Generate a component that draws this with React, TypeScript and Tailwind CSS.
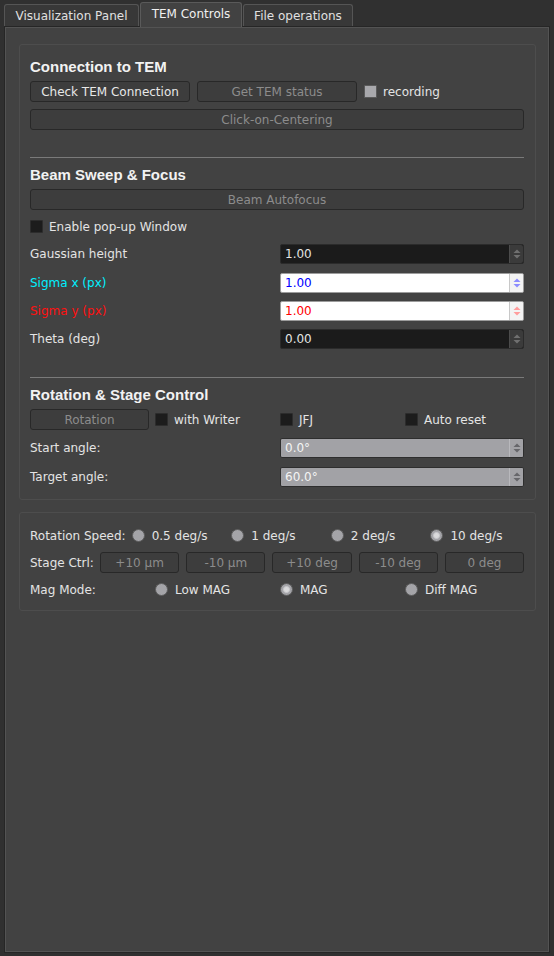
import type { ReactNode } from "react";

const FONT = { fontFamily: '"DejaVu Sans", "Noto Sans", sans-serif' };
const HEAD = { fontFamily: '"Liberation Sans", Arial, sans-serif' };

type SpinKind = "dark" | "blue" | "red" | "gray";

const spinStyles: Record<SpinKind, { box: string; text: string; btn: string; arrow: string }> = {
  dark: {
    box: "bg-[#1b1b1b] border-[#2b2b2b]",
    text: "text-[#e4e4e4]",
    btn: "bg-[#3b3b3b] border-[#4c4c4c]",
    arrow: "#707070",
  },
  blue: {
    box: "bg-white border-[#9c9c9c]",
    text: "text-[#0000ff]",
    btn: "bg-[#f3f3f3] border-[#c8c8c8]",
    arrow: "#8c8cff",
  },
  red: {
    box: "bg-white border-[#9c9c9c]",
    text: "text-[#ff0000]",
    btn: "bg-[#f3f3f3] border-[#c8c8c8]",
    arrow: "#ff9c9c",
  },
  gray: {
    box: "bg-[#a2a2a6] border-[#2e2e2e]",
    text: "text-[#f4f4f4]",
    btn: "bg-[#a2a2a6] border-[#b8b8bc]",
    arrow: "#66666a",
  },
};

const SpinBox = ({ value, kind }: { value: string; kind: SpinKind }) => {
  const s = spinStyles[kind];
  return (
    <div className={`col-span-2 flex h-[20px] rounded-[2px] border ${s.box}`}>
      <div className={`flex flex-1 items-center pl-[4px] text-[12px] ${s.text}`}>{value}</div>
      <div className={`flex w-[14px] items-center justify-center rounded-r-[2px] border-l ${s.btn}`}>
        <svg width="8" height="12" viewBox="0 0 8 12">
          <polygon points="0.5,5 4,1.5 7.5,5" fill={s.arrow} />
          <polygon points="0.5,7 4,10.5 7.5,7" fill={s.arrow} />
        </svg>
      </div>
    </div>
  );
};

const Button = ({ children, disabled, className = "" }: { children: ReactNode; disabled?: boolean; className?: string }) => (
  <div
    className={`flex h-[21px] min-w-0 items-center justify-center whitespace-nowrap rounded-[3px] border border-[#282828] bg-[#3d3d3d] text-[12px] ${
      disabled ? "text-[#8c8c8c]" : "text-[#e8e8e8]"
    } ${className}`}
  >
    {children}
  </div>
);

const Check = ({ label, light }: { label: string; light?: boolean }) => (
  <div className="flex items-center gap-[6px]">
    <span
      className={`h-[13px] w-[13px] rounded-[1px] border ${
        light ? "border-[#5a5a5a] bg-[#a8a8ac]" : "border-[#2c2c2c] bg-[#1c1c1c]"
      }`}
    />
    <span className="text-[12px] text-[#e4e4e4]">{label}</span>
  </div>
);

const Radio = ({ label, checked }: { label: string; checked?: boolean }) => (
  <div className="flex items-center gap-[7px]">
    <span className="flex h-[13px] w-[13px] items-center justify-center rounded-full border border-[#5c5c5c] bg-[#a4a4a8]">
      {checked && <span className="h-[7px] w-[7px] rounded-full border border-[#c8c8cc] bg-[#dadadc]" />}
    </span>
    <span className="whitespace-nowrap text-[12px] text-[#e4e4e4]">{label}</span>
  </div>
);

const Heading = ({ children, className = "" }: { children: ReactNode; className?: string }) => (
  <div className={`h-[18px] text-[15px] font-bold leading-[18px] text-[#f2f2f2] ${className}`} style={HEAD}>
    {children}
  </div>
);

const Sep = ({ className = "" }: { className?: string }) => <div className={`h-px bg-[#7a7a7a] ${className}`} />;

const Tab = ({ label, active, className = "" }: { label: string; active?: boolean; className?: string }) => (
  <div
    className={`flex items-center justify-center rounded-t-[3px] border border-b-0 text-[12px] ${
      active
        ? "relative z-10 -mb-px h-[25px] border-[#5a5a5a] bg-[#424242] pb-[2px] text-[#f0f0f0]"
        : "h-[22px] border-[#555555] bg-[#383838] text-[#e0e0e0]"
    } ${className}`}
  >
    {label}
  </div>
);

export default function App() {
  const spins: { label: string; color: string; value: string; kind: SpinKind; mt: string }[] = [
    { label: "Gaussian height", color: "text-[#e4e4e4]", value: "1.00", kind: "dark", mt: "mt-[8px]" },
    { label: "Sigma x (px)", color: "text-[#00f0ff]", value: "1.00", kind: "blue", mt: "mt-[9px]" },
    { label: "Sigma y (px)", color: "text-[#ff1010]", value: "1.00", kind: "red", mt: "mt-[8px]" },
    { label: "Theta (deg)", color: "text-[#e4e4e4]", value: "0.00", kind: "dark", mt: "mt-[8px]" },
  ];

  return (
    <div className="h-[956px] w-[554px] overflow-hidden bg-[#303030]" style={FONT}>
      <div className="flex h-[26px] items-end pl-[4px]">
        <Tab label="Visualization Panel" className="w-[135px]" />
        <Tab label="TEM Controls" active className="ml-[1px] w-[102px]" />
        <Tab label="File operations" className="ml-[1px] w-[110px]" />
      </div>

      <div className="ml-[4px] h-[927px] w-[546px] border border-[#262626] bg-[#424242]">
        <div className="h-full border border-[#535353] pl-[13px] pr-[12px] pt-[16px]">
          {/* group 1 */}
          <div className="flex flex-col rounded-[3px] border border-[#4d4d4d] pb-[12px] pl-[10px] pr-[11px] pt-[13px]">
            <Heading>Connection to TEM</Heading>
            <div className="mt-[5px] grid grid-cols-3 gap-[7px]">
              <Button>Check TEM Connection</Button>
              <Button disabled>Get TEM status</Button>
              <Check label="recording" light />
            </div>
            <Button disabled className="mt-[7px]">
              Click-on-Centering
            </Button>

            <Sep className="mt-[27px]" />
            <Heading className="mt-[8px]">Beam Sweep &amp; Focus</Heading>
            <Button disabled className="mt-[5px]">
              Beam Autofocus
            </Button>
            <div className="mt-[7px] flex h-[19px] items-center">
              <Check label="Enable pop-up Window" />
            </div>
            {spins.map((r) => (
              <div key={r.label} className={`grid grid-cols-4 items-center gap-x-[6px] ${r.mt}`}>
                <div className={`col-span-2 text-[12px] ${r.color}`}>{r.label}</div>
                <SpinBox value={r.value} kind={r.kind} />
              </div>
            ))}

            <Sep className="mt-[28px]" />
            <Heading className="mt-[8px]">Rotation &amp; Stage Control</Heading>
            <div className="mt-[5px] grid grid-cols-4 items-center gap-x-[6px]">
              <Button disabled>Rotation</Button>
              <Check label="with Writer" />
              <Check label="JFJ" />
              <Check label="Auto reset" />
            </div>
            <div className="mt-[8px] grid grid-cols-4 items-center gap-x-[6px]">
              <div className="col-span-2 text-[12px] text-[#e4e4e4]">Start angle:</div>
              <SpinBox value="0.0°" kind="gray" />
            </div>
            <div className="mt-[9px] grid grid-cols-4 items-center gap-x-[6px]">
              <div className="col-span-2 text-[12px] text-[#e4e4e4]">Target angle:</div>
              <SpinBox value="60.0°" kind="gray" />
            </div>
          </div>

          {/* group 2 */}
          <div className="mt-[12px] flex flex-col gap-[6px] rounded-[3px] border border-[#4d4d4d] pb-[10px] pl-[10px] pr-[11px] pt-[12px]">
            <div className="flex h-[21px] items-center gap-[6px]">
              <div className="shrink-0 whitespace-nowrap text-[12px] text-[#e4e4e4]">Rotation Speed:</div>
              <div className="flex flex-1 gap-[6px]">
                <div className="flex-1">
                  <Radio label="0.5 deg/s" />
                </div>
                <div className="flex-1">
                  <Radio label="1 deg/s" />
                </div>
                <div className="flex-1">
                  <Radio label="2 deg/s" />
                </div>
                <div className="flex-1">
                  <Radio label="10 deg/s" checked />
                </div>
              </div>
            </div>
            <div className="flex h-[21px] items-center gap-[7px]">
              <div className="w-[63px] shrink-0 whitespace-nowrap text-[12px] text-[#e4e4e4]">Stage Ctrl:</div>
              {["+10 µm", "-10 µm", "+10 deg", "-10 deg", "0 deg"].map((b) => (
                <Button key={b} disabled className="flex-1 basis-0">
                  {b}
                </Button>
              ))}
            </div>
            <div className="grid h-[21px] grid-cols-4 items-center gap-x-[6px]">
              <div className="text-[12px] text-[#e4e4e4]">Mag Mode:</div>
              <Radio label="Low MAG" />
              <Radio label="MAG" checked />
              <Radio label="Diff MAG" />
            </div>
          </div>
        </div>
      </div>
    </div>
  );
}
